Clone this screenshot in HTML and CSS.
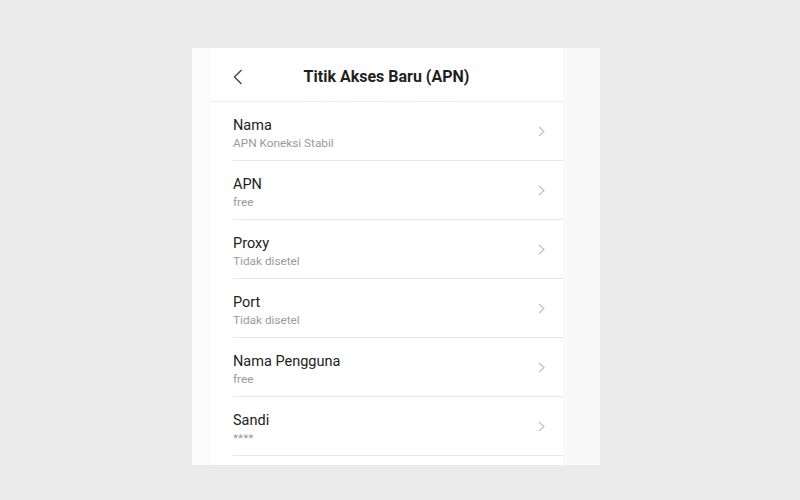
FILE: index.html
```html
<!DOCTYPE html>
<html>
<head>
    <title>Titik Akses Baru (APN)</title>
    <meta charset="UTF-8">
    <link rel="stylesheet" href="styles.css">
</head>
<body>
    <div class="frame">
        <div class="edge-left"></div>
        <div class="screen">
            <div class="header">
                <svg class="back" viewBox="0 0 10 16">
                    <path d="M8.5 1 L1.5 8 L8.5 15"/>
                </svg>
                <h3>Titik Akses Baru (APN)</h3>
            </div>
            <div class="list">
                <div class="row">
                    <div class="row-text">
                        <div class="label">Nama</div>
                        <div class="value">APN Koneksi Stabil</div>
                    </div>
                    <svg class="chevron" viewBox="0 0 7 11"><path d="M1 1 L6 5.5 L1 10"/></svg>
                </div>
                <div class="row">
                    <div class="row-text">
                        <div class="label">APN</div>
                        <div class="value">free</div>
                    </div>
                    <svg class="chevron" viewBox="0 0 7 11"><path d="M1 1 L6 5.5 L1 10"/></svg>
                </div>
                <div class="row">
                    <div class="row-text">
                        <div class="label">Proxy</div>
                        <div class="value">Tidak disetel</div>
                    </div>
                    <svg class="chevron" viewBox="0 0 7 11"><path d="M1 1 L6 5.5 L1 10"/></svg>
                </div>
                <div class="row">
                    <div class="row-text">
                        <div class="label">Port</div>
                        <div class="value">Tidak disetel</div>
                    </div>
                    <svg class="chevron" viewBox="0 0 7 11"><path d="M1 1 L6 5.5 L1 10"/></svg>
                </div>
                <div class="row">
                    <div class="row-text">
                        <div class="label">Nama Pengguna</div>
                        <div class="value">free</div>
                    </div>
                    <svg class="chevron" viewBox="0 0 7 11"><path d="M1 1 L6 5.5 L1 10"/></svg>
                </div>
                <div class="row">
                    <div class="row-text">
                        <div class="label">Sandi</div>
                        <div class="value">****</div>
                    </div>
                    <svg class="chevron" viewBox="0 0 7 11"><path d="M1 1 L6 5.5 L1 10"/></svg>
                </div>
            </div>
        </div>
        <div class="edge-right"></div>
    </div>
</body>
</html>
```

FILE: styles.css
```css
body {
    margin: 0;
    padding: 48px 0 0 192px;
    height: 500px;
    box-sizing: border-box;
    background: #ebebeb;
    font-family: Roboto, "Noto Sans", sans-serif;
    overflow: hidden;
}
.frame {
    display: flex;
    width: 408px;
    height: 417px;
    background: #fff;
}
.edge-left {
    width: 18px;
    background: #fbfbfb;
}
.edge-right {
    width: 37px;
    background: #f9f9f9;
}
.screen {
    width: 353px;
    background: #fff;
}
.header {
    height: 54px;
    border-bottom: 1px solid #ececec;
    display: flex;
    align-items: center;
    justify-content: center;
    position: relative;
    box-sizing: border-box;
    padding-top: 3px;
}
.header h3 {
    margin: 0;
    font-size: 16px;
    font-weight: bold;
    color: #1f1f1f;
}
.back {
    position: absolute;
    left: 23px;
    top: 21px;
    width: 10px;
    height: 16px;
    fill: none;
    stroke: #444;
    stroke-width: 1.4;
}
.list {
    padding-left: 23px;
}
.row {
    height: 59px;
    box-sizing: border-box;
    border-bottom: 1px solid #e6e6e6;
    display: flex;
    align-items: center;
    padding: 5px 18px 0 0;
}
.row-text {
    flex-grow: 1;
}
.label {
    font-size: 14.5px;
    line-height: 18px;
    color: #222;
}
.value {
    font-size: 11.8px;
    line-height: 16px;
    color: #9a9a9a;
    margin-top: 0;
}
.chevron {
    width: 7px;
    height: 11px;
    margin-top: -5px;
    fill: none;
    stroke: #bdbdbd;
    stroke-width: 1.1;
}
```
